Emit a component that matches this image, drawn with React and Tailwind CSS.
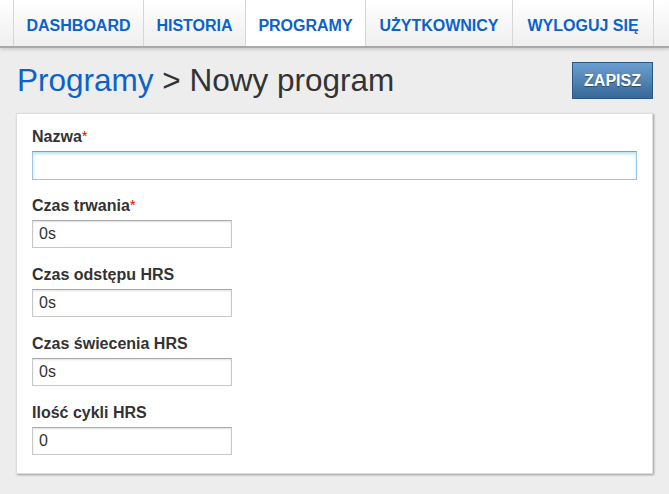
import React from 'react';

const tabs = [
  { label: 'DASHBOARD', w: 'w-[131px]' },
  { label: 'HISTORIA', w: 'w-[102px]' },
  { label: 'PROGRAMY', w: 'w-[120px]', active: true },
  { label: 'UŻYTKOWNICY', w: 'w-[147px]' },
  { label: 'WYLOGUJ SIĘ', w: 'w-[141px]' },
];

const fields = [
  { label: 'Czas trwania', value: '0s', required: true },
  { label: 'Czas odstępu HRS', value: '0s' },
  { label: 'Czas świecenia HRS', value: '0s' },
  { label: 'Ilość cykli HRS', value: '0' },
];

function Label({ children, required }) {
  return (
    <label className="block h-5 text-[16px] leading-5 font-bold text-[#333]">
      {children}
      {required && <span className="text-[#f00] font-normal text-[15px] relative -top-[1px]">*</span>}
    </label>
  );
}

export default function App() {
  return (
    <div className="min-h-[494px] w-[669px] bg-[#ededed] font-['Liberation_Sans',Arial,sans-serif] overflow-hidden">
      {/* top navigation */}
      <div className="h-[48px] bg-gradient-to-b from-white to-[#efefef] border-b-2 border-[#a9a9a9] shadow-[0_2px_3px_rgba(0,0,0,0.12)] pl-[13px] flex">
        {tabs.map((t) => (
          <div
            key={t.label}
            className={`${t.w} h-full flex items-center justify-center pt-[6px] border-r border-[#d6d6d6] first:border-l text-[16px] font-bold text-[#0b63c9] ${t.active ? 'bg-white' : ''}`}
          >
            {t.label}
          </div>
        ))}
      </div>

      {/* page header */}
      <div className="h-[65px] flex items-center justify-between pl-[17px] pr-[16px]">
        <h1 className="text-[31.5px] leading-none text-[#333] pt-[1px]">
          <span className="text-[#0b63c9]">Programy</span> &gt; Nowy program
        </h1>
        <button className="w-[81px] h-[37px] border border-[#2a5884] bg-gradient-to-b from-[#6c9fcf] to-[#386898] text-white font-bold text-[16px] [text-shadow:0_1px_1px_rgba(0,0,0,0.4)]">
          ZAPISZ
        </button>
      </div>

      {/* form card */}
      <div className="ml-[16px] w-[637px] bg-white border border-[#dedede] shadow-[1px_1px_2px_rgba(0,0,0,0.35)] pt-[13px] pb-[18px] px-[15px]">
        <div className="pb-[16px]">
          <Label required>Nazwa</Label>
          <input
            className="mt-[4px] block w-[605px] h-[29px] border border-[#9cc4e8] border-t-[#7f9fbf] shadow-[inset_0_2px_3px_rgba(140,210,235,0.6)] outline-none px-[6px] text-[16px] text-[#333]"
            defaultValue=""
          />
        </div>
        {fields.map((f, i) => (
          <div key={f.label} className={i < fields.length - 1 ? 'pb-[17px]' : ''}>
            <Label required={f.required}>{f.label}</Label>
            <input
              className="mt-[4px] block w-[200px] h-[28px] border border-[#c8c8c8] border-t-[#a9a9a9] shadow-[inset_0_1px_2px_rgba(0,0,0,0.12)] outline-none px-[6px] text-[16px] text-[#333]"
              defaultValue={f.value}
            />
          </div>
        ))}
      </div>
    </div>
  );
}
